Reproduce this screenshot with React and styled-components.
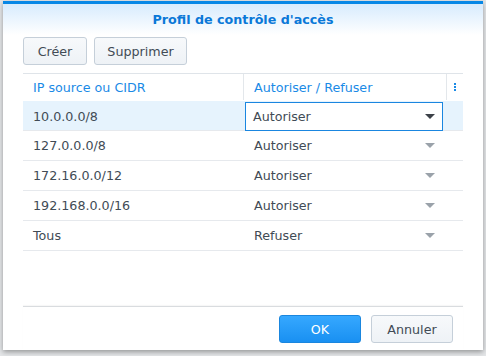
import styled, { createGlobalStyle } from 'styled-components';

const Global = createGlobalStyle`
  html, body {
    margin: 0;
    padding: 0;
    background: #e4e6e8;
  }
  #root {
    height: 356px;
  }
`;

const Page = styled.div`
  height: 356px;
  padding: 1px 3px 0;
  box-sizing: border-box;
  font-family: 'DejaVu Sans', Verdana, sans-serif;
  font-size: 12.7px;
  color: #414b55;
`;

const Dialog = styled.div`
  width: 480px;
  height: 349px;
  display: flex;
  flex-direction: column;
  background: #fff;
  box-shadow: 0 2px 5px rgba(0, 0, 0, 0.35);
`;

const TitleBar = styled.div`
  border-top: 3px solid #0687e6;
  height: 31px;
  display: flex;
  align-items: center;
  justify-content: center;
  background: linear-gradient(#d7ebfd, #ffffff);
  color: #0a78d8;
  font-weight: bold;
`;

const Toolbar = styled.div`
  display: flex;
  gap: 7px;
  padding: 2px 20px 0;
`;

const Button = styled.button`
  height: 28px;
  width: ${(p) => p.$w}px;
  padding: 0;
  border-radius: 3px;
  border: 1px solid ${(p) => (p.$primary ? '#1a86de' : '#c5cfd9')};
  background: ${(p) =>
    p.$primary ? 'linear-gradient(#36a8ff, #1990f2)' : 'linear-gradient(#f7f9fb, #eef2f6)'};
  color: ${(p) => (p.$primary ? '#fff' : '#414b55')};
  font-family: inherit;
  font-size: 12.7px;
  cursor: pointer;
`;

const Grid = styled.div`
  margin: 8px 20px 0;
  border-top: 1px solid #dfe4e9;
`;

const Row = styled.div`
  display: grid;
  grid-template-columns: 220px 203px 17px;
  height: ${(p) => (p.$head ? 26 : 29)}px;
  border-bottom: 1px solid ${(p) => (p.$head ? 'transparent' : '#e6e9ed')};
  background: ${(p) => (p.$selected ? '#e6f3fd' : 'transparent')};
`;

const HeadCell = styled.div`
  display: flex;
  align-items: center;
  padding-left: ${(p) => (p.$icon ? 0 : 10)}px;
  justify-content: ${(p) => (p.$icon ? 'center' : 'flex-start')};
  color: #1a8ae6;
  border-left: ${(p) => (p.$first ? 'none' : '1px solid #e3e7eb')};
`;

const Cell = styled.div`
  display: flex;
  align-items: center;
  padding-left: 10px;
`;

const Select = styled.div`
  display: flex;
  align-items: center;
  justify-content: space-between;
  margin: ${(p) => (p.$focused ? '1px 3px 0 2px' : '0 3px 0 2px')};
  padding: 0 7px 0 ${(p) => (p.$focused ? 7 : 8)}px;
  border: 1px solid ${(p) => (p.$focused ? '#1a86e0' : 'transparent')};
  background: ${(p) => (p.$focused ? '#fff' : 'transparent')};
  box-sizing: border-box;
  height: 29px;
`;

const Caret = styled.span`
  width: 0;
  height: 0;
  border-left: 5px solid transparent;
  border-right: 5px solid transparent;
  border-top: 5px solid ${(p) => (p.$focused ? '#3c4148' : '#9aa2aa')};
`;

const Dots = styled.span`
  display: flex;
  flex-direction: column;
  gap: 1px;
  & > i {
    width: 2px;
    height: 2px;
    background: #1a8ae6;
  }
`;

const Spacer = styled.div`
  flex: 1;
`;

const Footer = styled.div`
  margin: 0 20px;
  border-top: 1px solid #d9dcdf;
  box-shadow: 0 -1px 1px rgba(0, 0, 0, 0.03);
  display: flex;
  justify-content: flex-end;
  gap: 10px;
  padding: 8px 10px 7px 0;
`;

const rules = [
  ['10.0.0.0/8', 'Autoriser'],
  ['127.0.0.0/8', 'Autoriser'],
  ['172.16.0.0/12', 'Autoriser'],
  ['192.168.0.0/16', 'Autoriser'],
  ['Tous', 'Refuser'],
];

export default function App() {
  return (
    <>
      <Global />
      <Page>
        <Dialog>
          <TitleBar>Profil de contrôle d'accès</TitleBar>
          <Toolbar>
            <Button $w={64}>Créer</Button>
            <Button $w={93}>Supprimer</Button>
          </Toolbar>
          <Grid>
            <Row $head>
              <HeadCell $first>IP source ou CIDR</HeadCell>
              <HeadCell>Autoriser / Refuser</HeadCell>
              <HeadCell $icon>
                <Dots>
                  <i />
                  <i />
                  <i />
                </Dots>
              </HeadCell>
            </Row>
            {rules.map(([ip, action], i) => (
              <Row key={ip} $selected={i === 0}>
                <Cell>{ip}</Cell>
                <Select $focused={i === 0}>
                  {action}
                  <Caret $focused={i === 0} />
                </Select>
                <div />
              </Row>
            ))}
          </Grid>
          <Spacer />
          <Footer>
            <Button $primary $w={82}>OK</Button>
            <Button $w={82}>Annuler</Button>
          </Footer>
        </Dialog>
      </Page>
    </>
  );
}
